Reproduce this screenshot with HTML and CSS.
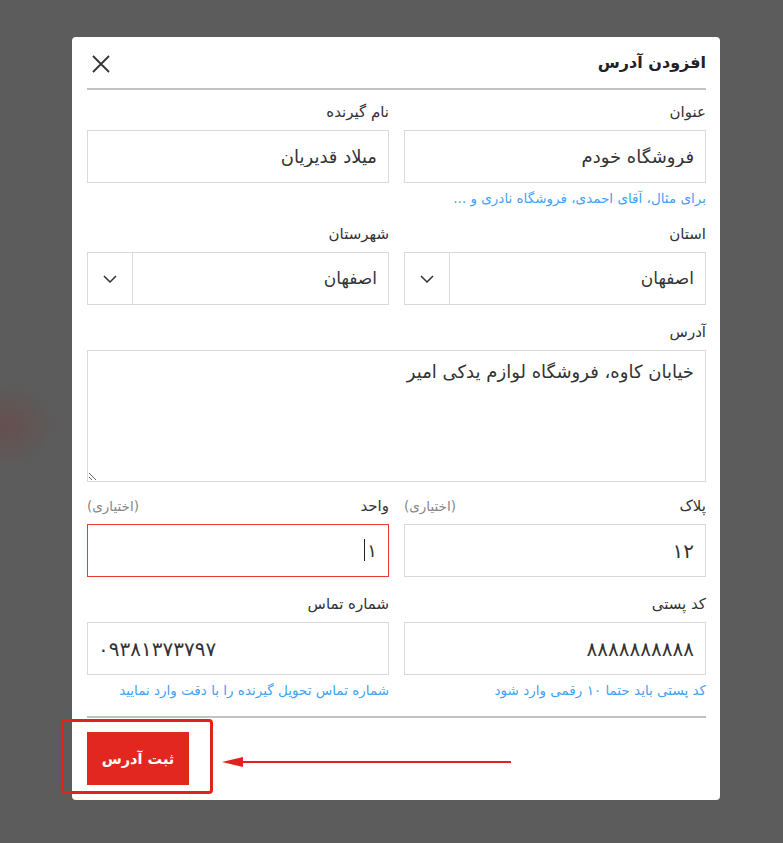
FILE: index.html
```html
<!DOCTYPE html>
<html lang="fa">
<head>
  <meta charset="UTF-8">
  <title>افزودن آدرس</title>
  <meta name="viewport" content="width=device-width, initial-scale=1.0">
  <link rel="stylesheet" href="styles.css">
</head>
<body>
  <div class="modal" dir="rtl">
    <div class="modal-header">
      <h3 class="modal-title">افزودن آدرس</h3>
      <button class="close-btn" type="button" aria-label="بستن">
        <svg width="18" height="18" viewBox="0 0 18 18">
          <path d="M1 1 L17 17 M17 1 L1 17" stroke="#333" stroke-width="1.8" fill="none"/>
        </svg>
      </button>
    </div>

    <form class="address-form">
      <div class="row">
        <div class="field">
          <label>عنوان</label>
          <input type="text" value="فروشگاه خودم">
          <p class="hint">برای مثال، آقای احمدی، فروشگاه نادری و ...</p>
        </div>
        <div class="field">
          <label>نام گیرنده</label>
          <input type="text" value="میلاد قدیریان">
        </div>
      </div>

      <div class="row">
        <div class="field">
          <label>استان</label>
          <div class="select">
            <span class="select-value">اصفهان</span>
            <span class="select-arrow">
              <svg width="14" height="8" viewBox="0 0 14 8"><path d="M1 1 L7 7 L13 1" stroke="#333" stroke-width="1.5" fill="none"/></svg>
            </span>
          </div>
        </div>
        <div class="field">
          <label>شهرستان</label>
          <div class="select">
            <span class="select-value">اصفهان</span>
            <span class="select-arrow">
              <svg width="14" height="8" viewBox="0 0 14 8"><path d="M1 1 L7 7 L13 1" stroke="#333" stroke-width="1.5" fill="none"/></svg>
            </span>
          </div>
        </div>
      </div>

      <div class="row row-full row-tight">
        <div class="field">
          <label>آدرس</label>
          <textarea>خیابان کاوه، فروشگاه لوازم یدکی امیر</textarea>
        </div>
      </div>

      <div class="row">
        <div class="field">
          <label>پلاک <span class="optional">(اختیاری)</span></label>
          <input type="text" class="digits" value="۱۲">
        </div>
        <div class="field">
          <label>واحد <span class="optional">(اختیاری)</span></label>
          <div class="input-wrap">
            <input type="text" class="is-error" value="۱">
            <span class="caret"></span>
          </div>
        </div>
      </div>

      <div class="row row-last">
        <div class="field">
          <label>کد پستی</label>
          <input type="text" class="digits" value="۸۸۸۸۸۸۸۸۸۸">
          <p class="hint">کد پستی باید حتما ۱۰ رقمی وارد شود</p>
        </div>
        <div class="field">
          <label>شماره تماس</label>
          <input type="text" class="digits ltr" value="۰۹۳۸۱۳۷۳۷۹۷">
          <p class="hint">شماره تماس تحویل گیرنده را با دقت وارد نمایید</p>
        </div>
      </div>
    </form>

    <div class="modal-footer">
      <button class="submit-btn" type="button">ثبت آدرس</button>
    </div>

    <div class="callout"></div>
    <svg class="callout-arrow" width="292" height="14" viewBox="0 0 292 14">
      <polygon points="1,7 22,2 22,12" fill="#e0231c"/>
      <line x1="20" y1="7" x2="290" y2="7" stroke="#e0231c" stroke-width="2"/>
    </svg>
  </div>
</body>
</html>
```

FILE: styles.css
```css
* {
  box-sizing: border-box;
}

body {
  margin: 0;
  height: 843px;
  overflow: hidden;
  font-family: "DejaVu Sans", "Noto Sans", sans-serif;
  background:
    radial-gradient(ellipse 50px 42px at 6px 425px, rgba(108, 70, 70, 0.6), rgba(92, 92, 92, 0)),
    #5c5c5c;
}

.modal {
  position: relative;
  width: 648px;
  margin: 37px 0 0 72px;
  padding: 0 14px 15px 15px;
  background: #fff;
  border-radius: 4px;
}

.modal-header {
  display: flex;
  align-items: center;
  justify-content: space-between;
  height: 53px;
  border-bottom: 2px solid #c2c2c2;
}

.modal-title {
  margin: 0;
  font-size: 16px;
  font-weight: bold;
  color: #222;
}

.close-btn {
  background: none;
  border: none;
  padding: 0;
  margin: 3px 0 0 5px;
  width: 18px;
  height: 18px;
  cursor: pointer;
}

.address-form {
  padding-top: 12px;
}

.row {
  display: grid;
  grid-template-columns: 1fr 1fr;
  column-gap: 15px;
  margin-bottom: 17px;
}

.row-full {
  grid-template-columns: 1fr;
}

.row-tight {
  margin-bottom: 14px;
}

.row-last {
  margin-bottom: 0;
}

.field label {
  display: flex;
  justify-content: space-between;
  align-items: center;
  font-size: 15px;
  line-height: 20px;
  margin-bottom: 8px;
  color: #333;
}

.optional {
  font-size: 13.5px;
  color: #888;
}

.field input,
.field textarea {
  display: block;
  width: 100%;
  border: 1px solid #dadada;
  border-radius: 0;
  font-family: inherit;
  font-size: 18px;
  color: #333;
  outline: none;
  background: #fff;
}

.field input {
  height: 53px;
  padding: 0 11px;
}

.field input.digits {
  font-size: 20px;
  letter-spacing: 2.5px;
}

.field input.ltr {
  direction: ltr;
  text-align: left;
  padding-left: 10px;
}

.field input.is-error {
  border-color: #e53935;
}

.field textarea {
  height: 132px;
  padding: 9px 11px;
  line-height: 24px;
}

.input-wrap {
  position: relative;
}

.caret {
  position: absolute;
  top: 15px;
  right: 24px;
  width: 1px;
  height: 22px;
  background: #222;
}

.hint {
  margin: 6px 0 0;
  font-size: 13.5px;
  line-height: 18px;
  color: #44a2f5;
}

.select {
  display: flex;
  height: 53px;
  border: 1px solid #dadada;
}

.select-value {
  flex: 1;
  padding: 0 11px;
  line-height: 51px;
  font-size: 17px;
  color: #333;
}

.select-arrow {
  width: 45px;
  display: flex;
  align-items: center;
  justify-content: center;
  border-right: 1px solid #dadada;
}

.modal-footer {
  display: flex;
  justify-content: flex-end;
  margin-top: 17px;
  padding-top: 14px;
  border-top: 2px solid #c2c2c2;
}

.submit-btn {
  width: 102px;
  height: 53px;
  border: none;
  background: #e1271f;
  color: #fff;
  font-family: inherit;
  font-size: 14.5px;
  font-weight: bold;
  cursor: pointer;
}

.callout {
  position: absolute;
  left: -11px;
  top: 682px;
  width: 152px;
  height: 75px;
  border: 3px solid #e0231c;
  border-radius: 4px;
}

.callout-arrow {
  position: absolute;
  left: 149px;
  top: 718px;
}
```
